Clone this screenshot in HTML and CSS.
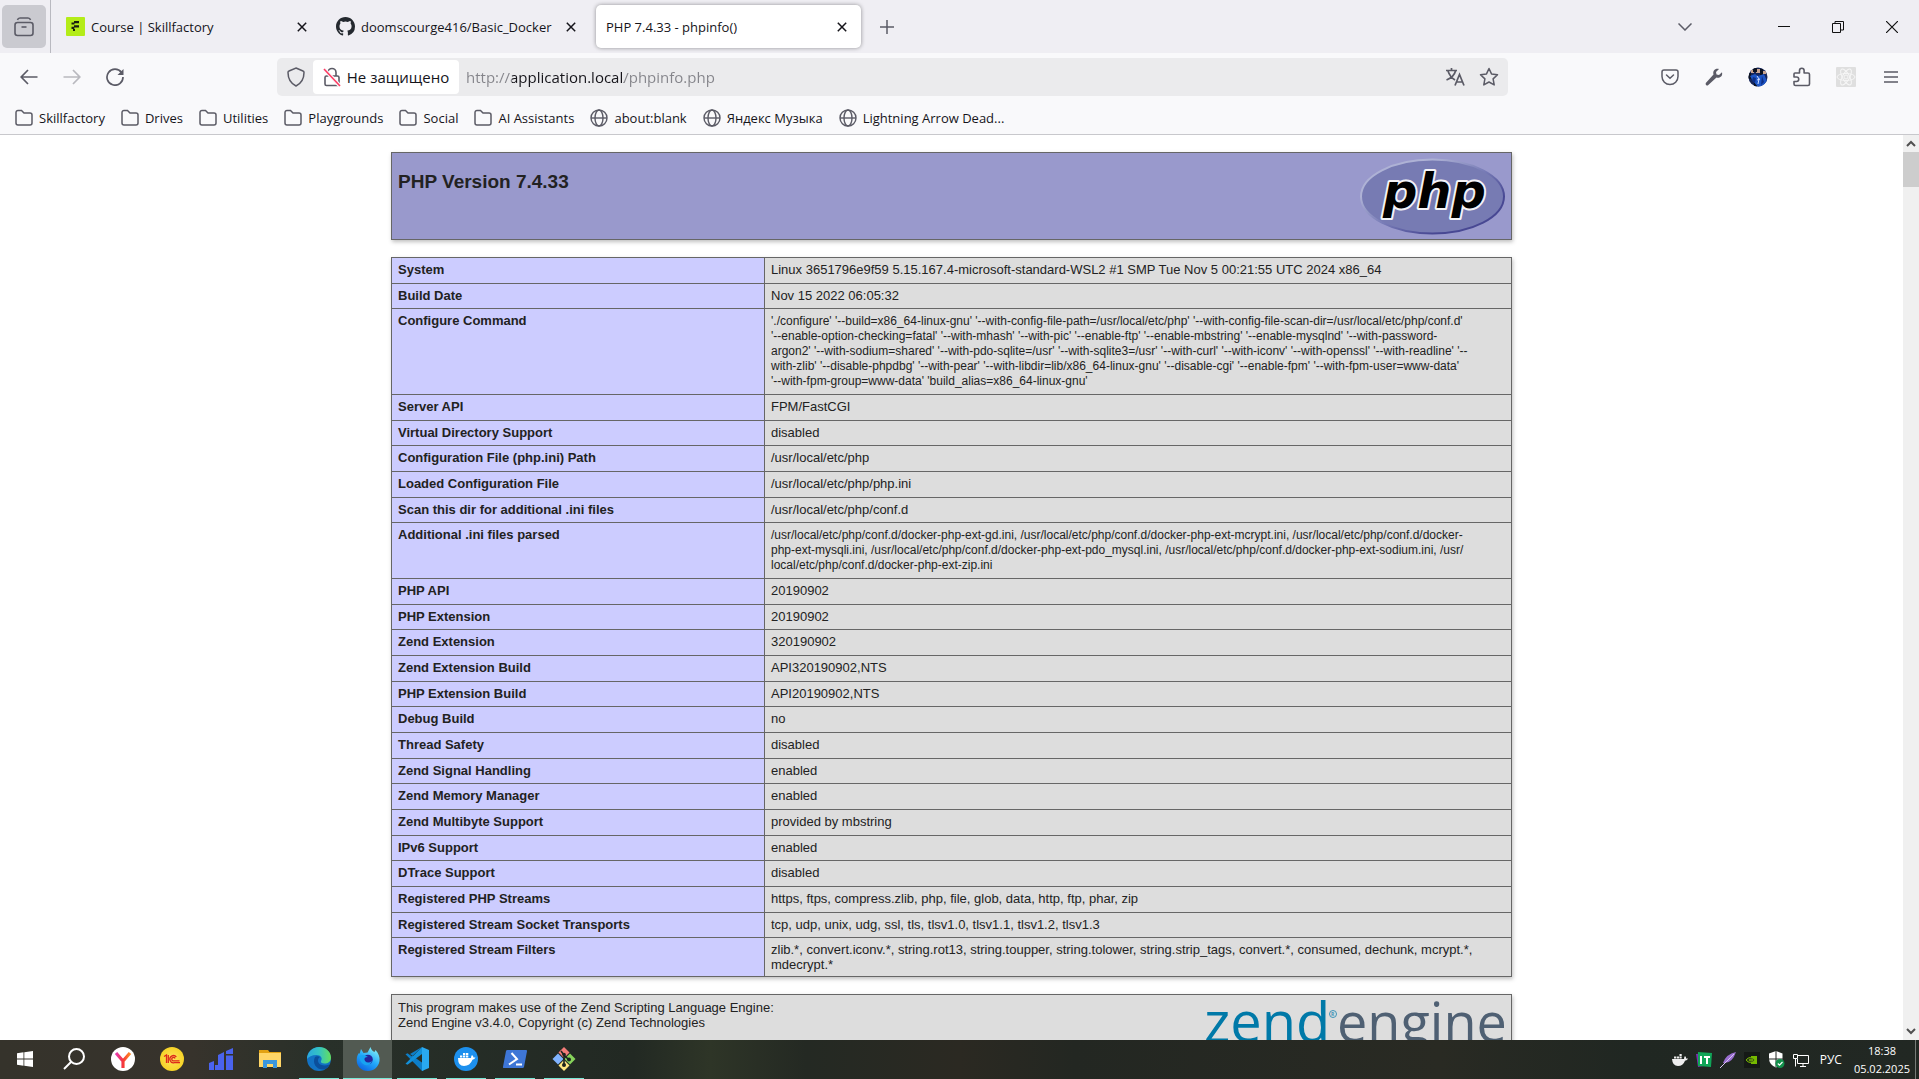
FILE: index.html
```html
<!DOCTYPE html>
<html lang="ru">
<head>
<meta charset="utf-8">
<title>PHP 7.4.33 - phpinfo()</title>
<link rel="stylesheet" href="styles.css">
</head>
<body>
<svg class="defs" aria-hidden="true">
  <symbol id="folder" viewBox="0 0 18 18"><path d="M1 14V3.500a2 2 0 0 1 2-2h3.500l2.500 2.500h6a2 2 0 0 1 2 2V14a2 2 0 0 1-2 2H3a2 2 0 0 1-2-2z" fill="none" stroke="currentColor" stroke-width="1.500"/></symbol>
  <symbol id="globe" viewBox="0 0 18 18"><g fill="none" stroke="currentColor" stroke-width="1.400"><circle cx="9" cy="9" r="8"/><ellipse cx="9" cy="9" rx="4" ry="8"/><path d="M1 9h16"/></g></symbol>
  <symbol id="cross" viewBox="0 0 10 10"><path d="M.8.8l8.400 8.400M9.200.8L.8 9.200" stroke="currentColor" stroke-width="1.500" fill="none"/></symbol>
</svg>

<header class="browser">
  <div class="tabs">
    <button class="view" aria-label="Firefox View"><svg width="20" height="20" viewBox="0 0 20 20" fill="none" stroke="currentColor" stroke-width="1.600"><path d="M3.500 3q.5-2 2.500-2h8q2 0 2.500 2"/><rect x="1" y="5.500" width="18" height="13" rx="2.500"/><path d="M7.500 10h5"/></svg></button>
    <div class="tab tab-wide">
      <svg width="19" height="19" viewBox="0 0 19 19"><rect width="19" height="19" rx="1" fill="#b4ec18"/><path d="M8 4h5v2.200H8zM5.500 5.500h3v2h-3zM8 8.300h5v2.200H8zM5.500 9.800h2.800v2.200H5.500zM7 12h2v2H7z" fill="#1a1f10"/></svg>
      <span class="tab-title">Course | Skillfactory</span>
      <button class="close" aria-label="Close tab"><svg width="10" height="10"><use href="#cross"/></svg></button>
    </div>
    <div class="tab">
      <svg width="19" height="19" viewBox="0 0 16 16"><path fill="#24292f" d="M8 0C3.580 0 0 3.580 0 8c0 3.540 2.290 6.530 5.470 7.590.4.070.55-.17.55-.38 0-.19-.01-.82-.01-1.490-2.010.37-2.530-.49-2.690-.94-.09-.23-.48-.94-.82-1.130-.28-.15-.68-.52-.01-.53.63-.01 1.080.58 1.230.82.72 1.210 1.870.87 2.330.66.070-.52.28-.87.51-1.070-1.780-.2-3.640-.89-3.640-3.950 0-.87.31-1.590.82-2.150-.08-.2-.36-1.020.08-2.120 0 0 .67-.21 2.200.82a7.600 7.600 0 0 1 4 0c1.530-1.040 2.200-.82 2.200-.82.44 1.100.16 1.920.08 2.120.51.56.82 1.270.82 2.150 0 3.070-1.870 3.750-3.650 3.950.29.25.54.73.54 1.480 0 1.070-.01 1.930-.01 2.200 0 .21.15.46.55.38A8 8 0 0 0 16 8c0-4.420-3.580-8-8-8z"/></svg>
      <span class="tab-title">doomscourge416/Basic_Docker</span>
      <button class="close" aria-label="Close tab"><svg width="10" height="10"><use href="#cross"/></svg></button>
    </div>
    <div class="tab tab-active">
      <span class="tab-title">PHP 7.4.33 - phpinfo()</span>
      <button class="close" aria-label="Close tab"><svg width="10" height="10"><use href="#cross"/></svg></button>
    </div>
    <button class="new-tab" aria-label="New tab"><svg width="14" height="14" viewBox="0 0 14 14" stroke="currentColor" stroke-width="1.500"><path d="M7 0v14M0 7h14"/></svg></button>
    <div class="window-controls">
      <button class="list-tabs" aria-label="List all tabs"><svg width="14" height="8" viewBox="0 0 14 8" fill="none" stroke="#5b5b66" stroke-width="1.500"><path d="M.5.5L7 7 13.500.5"/></svg></button>
      <button aria-label="Minimize"><svg width="12" height="12" viewBox="0 0 12 12" stroke="#111"><path d="M0 5.500h12"/></svg></button>
      <button aria-label="Restore"><svg width="12" height="12" viewBox="0 0 12 12" fill="none" stroke="#111"><path d="M.5 2.500h8v9h-8zM3 2.500v-2h8.500v8.500H9"/></svg></button>
      <button aria-label="Close window"><svg width="12" height="12" viewBox="0 0 12 12" stroke="#111" stroke-width="1.200"><path d="M0 0l12 12M12 0L0 12"/></svg></button>
    </div>
  </div>

  <div class="nav">
    <div class="nav-buttons">
      <button aria-label="Back"><svg width="18" height="16" viewBox="0 0 18 16" fill="none" stroke="currentColor" stroke-width="1.700"><path d="M17.500 8H1.500M8 1L1.200 8 8 15"/></svg></button>
      <button aria-label="Forward" disabled><svg width="18" height="16" viewBox="0 0 18 16" fill="none" stroke="currentColor" stroke-width="1.700"><path d="M.5 8h16M10 1l6.800 7-6.800 7"/></svg></button>
      <button aria-label="Reload"><svg width="18" height="18" viewBox="0 0 18 18" fill="none" stroke="currentColor" stroke-width="1.700"><path d="M15.500 4.500A8 8 0 1 0 17 9"/><path d="M17.500 1v6H11.500z" fill="currentColor" stroke="none"/></svg></button>
    </div>
    <div class="urlbar">
      <button class="shield" aria-label="Tracking protection"><svg width="18" height="20" viewBox="0 0 18 20" fill="none" stroke="currentColor" stroke-width="1.500"><path d="M9 1l7 3q1 .4 1 1.500C17 12 14 16.500 9 19 4 16.500 1 12 1 5.500 1 4.400 1 4.400 2 4z"/></svg></button>
      <button class="identity"><svg width="18" height="20" viewBox="0 0 18 20" fill="none" stroke="currentColor" stroke-width="1.600"><path d="M5 9V5.500a4 4 0 0 1 8 0V9"/><rect x="2" y="9" width="14" height="9.500" rx="1.500"/><path d="M1 2l16 17" stroke="#f9f9fb" stroke-width="4"/><path d="M1 2l16 17" stroke="#ff3b62"/></svg>Не защищено</button>
      <input class="address" type="text" aria-label="Address" value="http://application.local/phpinfo.php">
      <button aria-label="Translate"><svg width="20" height="20" viewBox="0 0 20 20" fill="none" stroke="currentColor" stroke-width="1.700"><path d="M1 3.500h11M6.500 1v2.500M3 4q2 6 7 9M10.500 4Q9 10 1.500 13M10 18.500l4.500-11 4.500 11M11.500 15h6"/></svg></button>
      <button aria-label="Bookmark this page"><svg width="20" height="20" viewBox="0 0 20 20" fill="none" stroke="currentColor" stroke-width="1.500" stroke-linejoin="round"><path d="M10 1.500l2.500 5.400 6 .8-4.400 4.200 1.100 6-5.200-2.900-5.200 2.900 1.100-6L1.500 7.700l6-.8z"/></svg></button>
    </div>
    <div class="extensions">
      <button aria-label="Save to Pocket"><svg width="18" height="18" viewBox="0 0 18 18" fill="none" stroke="currentColor" stroke-width="1.500" stroke-linecap="round"><path d="M3 2h12a2 2 0 0 1 2 2v4.500a8 8 0 0 1-16 0V4a2 2 0 0 1 2-2z"/><path d="M5.500 7L9 10.300 12.500 7"/></svg></button>
      <button aria-label="Developer tools"><svg width="18" height="18" viewBox="0 0 18 18"><path d="M17 4.200L14 7l-2.500-.5L11 4l3-3C10 0 7.500 3 8.500 6.500L.8 15q-.6 1.500.5 2.200t2-.2L11.500 9.500C15 10.500 18 8 17 4.200z" fill="currentColor"/></svg></button>
      <button aria-label="Account"><svg width="20" height="20" viewBox="0 0 20 20"><clipPath id="face"><circle cx="10" cy="10" r="9.500"/></clipPath><g clip-path="url(#face)"><path fill="#16265a" d="M0 0h20v20H0z"/><path fill="#c9a48f" d="M3 3h3v3H3zM8 2h4v4H8zM15 4h3v3h-3z"/><path fill="#0c1220" d="M5 1h4v4H5zM12 2h3v6h-3zM0 6h3v6H0zM6 16h3v4H6z"/><path fill="#1d55c5" d="M2 9l5-2 3 2 6-2 3 7-4 6h-5L5 14z"/><path fill="#0e2f86" d="M5 10l3 1-1 5-3-2zM14 9l2 6-3 3z"/><path d="M9 9l2 3-1 5M9 13l3-1" stroke="#cfdcff" fill="none"/></g></svg></button>
      <button aria-label="Extensions"><svg width="18" height="20" viewBox="0 0 18 20" fill="none" stroke="currentColor" stroke-width="1.600" stroke-linejoin="round"><path d="M2 6h4.500V3.500a2.300 2.300 0 0 1 4.600 0V6H15a1.500 1.500 0 0 1 1.500 1.500V17a1.500 1.500 0 0 1-1.500 1.500H2.500A1.500 1.500 0 0 1 1 17v-2.500h2.500a2.200 2.200 0 0 0 0-4.500H1V7a1 1 0 0 1 1-1z"/></svg></button>
      <button aria-label="React Developer Tools"><svg width="20" height="20" viewBox="0 0 20 20" fill="none" stroke="#f6f6f6"><rect width="20" height="20" rx="1" fill="#dfdfdf" stroke="none"/><circle cx="10" cy="10" r="2"/><ellipse cx="10" cy="10" rx="9" ry="3.500"/><ellipse cx="10" cy="10" rx="9" ry="3.500" transform="rotate(60 10 10)"/><ellipse cx="10" cy="10" rx="9" ry="3.500" transform="rotate(120 10 10)"/></svg></button>
      <button class="menu" aria-label="Menu"><svg width="14" height="12" viewBox="0 0 14 12" stroke="currentColor" stroke-width="1.500"><path d="M0 1h14M0 6h14M0 11h14"/></svg></button>
    </div>
  </div>

  <nav class="bookmarks">
    <a href="#"><svg width="18" height="18"><use href="#folder"/></svg>Skillfactory</a>
    <a href="#"><svg width="18" height="18"><use href="#folder"/></svg>Drives</a>
    <a href="#"><svg width="18" height="18"><use href="#folder"/></svg>Utilities</a>
    <a href="#"><svg width="18" height="18"><use href="#folder"/></svg>Playgrounds</a>
    <a href="#"><svg width="18" height="18"><use href="#folder"/></svg>Social</a>
    <a href="#"><svg width="18" height="18"><use href="#folder"/></svg>AI Assistants</a>
    <a href="#"><svg width="18" height="18"><use href="#globe"/></svg>about:blank</a>
    <a href="#"><svg width="18" height="18"><use href="#globe"/></svg>Яндекс Музыка</a>
    <a href="#"><svg width="18" height="18"><use href="#globe"/></svg>Lightning Arrow Dead...</a>
  </nav>
</header>

<div class="viewport">
  <main class="page" lang="en">
    <div class="box banner">
      <h1>PHP Version 7.4.33</h1>
      <svg class="php-logo" width="145" height="77" viewBox="0 0 145 77" role="img" aria-label="PHP logo">
        <defs>
          <linearGradient id="rim" x1="0" y1="0" x2="1" y2="1"><stop offset="0.250" stop-color="#aeb2d5"/><stop offset="0.500" stop-color="#7a7eb8"/><stop offset="0.750" stop-color="#484893"/></linearGradient>
        </defs>
        <ellipse cx="72.500" cy="38.500" rx="71.500" ry="37" fill="#777bb3" stroke="url(#rim)" stroke-width="2"/>
        <text x="23" y="50" class="php-word">php</text>
      </svg>
    </div>

    <table class="box info">
      <tr><th scope="row">System</th><td>Linux 3651796e9f59 5.15.167.4-microsoft-standard-WSL2 #1 SMP Tue Nov 5 00:21:55 UTC 2024 x86_64</td></tr>
      <tr><th scope="row">Build Date</th><td>Nov 15 2022 06:05:32</td></tr>
      <tr><th scope="row">Configure Command</th><td class="long">'./configure' '--build=x86_64-linux-gnu' '--with-config-file-path=/usr/local/etc/php' '--with-config-file-scan-dir=/usr/local/etc/php/conf.d'<br>'--enable-option-checking=fatal' '--with-mhash' '--with-pic' '--enable-ftp' '--enable-mbstring' '--enable-mysqlnd' '--with-password-<br>argon2' '--with-sodium=shared' '--with-pdo-sqlite=/usr' '--with-sqlite3=/usr' '--with-curl' '--with-iconv' '--with-openssl' '--with-readline' '--<br>with-zlib' '--disable-phpdbg' '--with-pear' '--with-libdir=lib/x86_64-linux-gnu' '--disable-cgi' '--enable-fpm' '--with-fpm-user=www-data'<br>'--with-fpm-group=www-data' 'build_alias=x86_64-linux-gnu'</td></tr>
      <tr><th scope="row">Server API</th><td>FPM/FastCGI</td></tr>
      <tr><th scope="row">Virtual Directory Support</th><td>disabled</td></tr>
      <tr><th scope="row">Configuration File (php.ini) Path</th><td>/usr/local/etc/php</td></tr>
      <tr><th scope="row">Loaded Configuration File</th><td>/usr/local/etc/php/php.ini</td></tr>
      <tr><th scope="row">Scan this dir for additional .ini files</th><td>/usr/local/etc/php/conf.d</td></tr>
      <tr><th scope="row">Additional .ini files parsed</th><td class="long">/usr/local/etc/php/conf.d/docker-php-ext-gd.ini, /usr/local/etc/php/conf.d/docker-php-ext-mcrypt.ini, /usr/local/etc/php/conf.d/docker-<br>php-ext-mysqli.ini, /usr/local/etc/php/conf.d/docker-php-ext-pdo_mysql.ini, /usr/local/etc/php/conf.d/docker-php-ext-sodium.ini, /usr/<br>local/etc/php/conf.d/docker-php-ext-zip.ini</td></tr>
      <tr><th scope="row">PHP API</th><td>20190902</td></tr>
      <tr><th scope="row">PHP Extension</th><td>20190902</td></tr>
      <tr><th scope="row">Zend Extension</th><td>320190902</td></tr>
      <tr><th scope="row">Zend Extension Build</th><td>API320190902,NTS</td></tr>
      <tr><th scope="row">PHP Extension Build</th><td>API20190902,NTS</td></tr>
      <tr><th scope="row">Debug Build</th><td>no</td></tr>
      <tr><th scope="row">Thread Safety</th><td>disabled</td></tr>
      <tr><th scope="row">Zend Signal Handling</th><td>enabled</td></tr>
      <tr><th scope="row">Zend Memory Manager</th><td>enabled</td></tr>
      <tr><th scope="row">Zend Multibyte Support</th><td>provided by mbstring</td></tr>
      <tr><th scope="row">IPv6 Support</th><td>enabled</td></tr>
      <tr><th scope="row">DTrace Support</th><td>disabled</td></tr>
      <tr><th scope="row">Registered PHP Streams</th><td>https, ftps, compress.zlib, php, file, glob, data, http, ftp, phar, zip</td></tr>
      <tr><th scope="row">Registered Stream Socket Transports</th><td>tcp, udp, unix, udg, ssl, tls, tlsv1.0, tlsv1.1, tlsv1.2, tlsv1.3</td></tr>
      <tr><th scope="row">Registered Stream Filters</th><td>zlib.*, convert.iconv.*, string.rot13, string.toupper, string.tolower, string.strip_tags, convert.*, consumed, dechunk, mcrypt.*,<br>mdecrypt.*</td></tr>
    </table>

    <div class="box engine">
      <p>This program makes use of the Zend Scripting Language Engine:<br>Zend Engine v3.4.0, Copyright (c) Zend Technologies</p>
      <svg class="zend-logo" width="302" height="64" viewBox="0 0 302 64" role="img" aria-label="Zend engine logo">
        <text x="0" y="42" class="zend-word">zend</text>
        <g fill="none" stroke="#3b93b8"><circle cx="129" cy="14" r="3.500"/></g>
        <text x="127" y="16" class="zend-reg">R</text>
        <text x="133" y="42" class="engine-word">engine</text>
      </svg>
    </div>
  </main>
  <div class="scrollbar" aria-hidden="true">
    <span class="arrow"><svg width="10" height="7" viewBox="0 0 10 7" fill="none" stroke="#505050" stroke-width="2"><path d="M1 6l4-4 4 4"/></svg></span>
    <span class="thumb"></span>
    <span class="arrow arrow-down"><svg width="10" height="7" viewBox="0 0 10 7" fill="none" stroke="#505050" stroke-width="2"><path d="M1 1l4 4 4-4"/></svg></span>
  </div>
</div>

<footer class="taskbar">
  <div class="apps">
    <button aria-label="Start"><svg width="16" height="16" viewBox="0 0 16 16" fill="#fff"><path d="M0 2.200L6.500 1.300V7.600H0zM7.300 1.200L16 0V7.600H7.300zM0 8.400h6.500v6.300L0 13.800zM7.300 8.400H16V16L7.300 14.800z"/></svg></button>
    <button aria-label="Search"><svg width="22" height="22" viewBox="0 0 22 22" fill="none" stroke="#fff" stroke-width="2"><circle cx="13.500" cy="8.500" r="7.500"/><path d="M8 14l-7 7"/></svg></button>
    <button aria-label="Yandex Browser"><svg width="24" height="24" viewBox="0 0 24 24"><defs><linearGradient id="ya" x1="0" x2="1"><stop offset="0" stop-color="#e53bb0"/><stop offset=".5" stop-color="#f5363a"/><stop offset="1" stop-color="#ff8a20"/></linearGradient></defs><circle cx="12" cy="12" r="12" fill="#fff"/><path d="M5 6l7 8 7-8M12 13v8" fill="none" stroke="url(#ya)" stroke-width="3.200"/></svg></button>
    <button aria-label="1C"><svg width="24" height="24" viewBox="0 0 24 24"><defs><radialGradient id="c1"><stop offset="0" stop-color="#ffe45c"/><stop offset="1" stop-color="#f6d327"/></radialGradient></defs><circle cx="12" cy="12" r="12" fill="url(#c1)"/><g fill="none" stroke="#dd2a1b" stroke-width="1.300"><path d="M4 9.500L6.500 8v8M8.300 8v8M16.300 10a3.600 3.600 0 1 0-2 5.700H20M15 11.500a1.700 1.700 0 1 0-1 2.300h5.500"/></g></svg></button>
    <button aria-label="Statistics"><svg width="24" height="22" viewBox="0 0 24 22" fill="#4a63ee"><path d="M0 15l5-2v9H0zM6 17h3v5H6zM9 7l6-3v18H9zM17 3l7-3v6h-7zM17 7.500h7V22h-7z"/></svg></button>
    <button aria-label="Explorer"><svg width="22" height="18" viewBox="0 0 22 18"><path fill="#e2a213" d="M0 0h9l1.500 2H22v3H0z"/><path fill="#ffd667" d="M0 3h22v14H0z"/><path fill="#3a96dd" d="M4 18v-8h14v8h-4v-4H8v4z"/></svg></button>
    <button class="running" aria-label="Edge"><svg width="24" height="24" viewBox="0 0 24 24"><defs><linearGradient id="edge-top" x1="0" x2="1"><stop offset="0" stop-color="#2aa7df"/><stop offset=".5" stop-color="#34c3c3"/><stop offset="1" stop-color="#64df5c"/></linearGradient></defs><circle cx="12" cy="12" r="12" fill="#1272c4"/><path fill="url(#edge-top)" d="M0 12C0 5 5.500 0 12 0c7 0 12 5 12 10.500 0 4-3 6-6.500 6-3 0-4-1.300-3.500-2.500 2-3-.5-6-4.500-6C5 8 1.500 10 0 12z"/><path fill="#0b4f9c" d="M8 10c-3 6 1 13 9 12.500 2.500-.5 5-3 5.500-5C15 20 11 17 11 13.500c0-2 1-3 2-3.500-1.500-1-4-1-5 0z"/></svg></button>
    <button class="running focused" aria-label="Firefox"><svg width="24" height="24" viewBox="0 0 24 24"><defs><linearGradient id="fx" x1=".8" y1="0" x2=".2" y2="1"><stop offset="0" stop-color="#8bf3f5"/><stop offset=".5" stop-color="#23a9fb"/><stop offset="1" stop-color="#0b61e0"/></linearGradient></defs><path fill="url(#fx)" d="M5 2l2.500 4 4-.5L14.500 0q1 4 4 5l1-2c3 3 4.500 7 4 11C22.500 20 18 24 12 24 5 24 .5 19 .7 13 .8 9 2 7 3 6l.5 1z"/><circle cx="12" cy="12.500" r="4.800" fill="#25259c"/><path d="M3 9q6-2 9 1-5 0-3 4 3 3 7 0-2 5-7 4-5-2-6-9z" fill="#17a3f2"/></svg></button>
    <button class="running" aria-label="Visual Studio Code"><svg width="24" height="24" viewBox="0 0 24 24"><path fill="#0d7ec8" d="M17 0L7 9.600 2.500 6.200.5 7.200 17 24l2-1V17L5 7z"/><path fill="#1290da" d="M17 0v7L2.500 17.800l-2-1z"/><path fill="#29a9f1" d="M17 0l7 3v18l-7 3z"/></svg></button>
    <button class="running" aria-label="Docker Desktop"><svg width="24" height="24" viewBox="0 0 24 24"><circle cx="12" cy="12" r="12" fill="#1d90ee"/><path fill="#fff" d="M4 11h13q0-2 1-3 1.500 1 1.500 2.500h2q-1 2-3 2.300Q16 19 10 19 4 19 4 11zM6 8.500h2.300v2H6zM9 8.500h2.300v2H9zM12 8.500h2.300v2H12zM12 6h2.300v2H12zM9 6h2.300v2H9z"/></svg></button>
    <button class="running" aria-label="PowerShell"><svg width="24" height="20" viewBox="0 0 24 20"><path fill="#3e76d6" d="M4.500 1H23a1 1 0 0 1 1 1.200L21 18a1.500 1.500 0 0 1-1.500 1H1a1 1 0 0 1-1-1.200L3 2a1.500 1.500 0 0 1 1.500-1z"/><path d="M8.500 4l5.500 6-8 5.500M13 15.500h6" fill="none" stroke="#fff" stroke-width="2"/></svg></button>
    <button class="running" aria-label="Git Bash"><svg width="24" height="24" viewBox="0 0 24 24"><path fill="#f37c78" d="M12 0l5.500 5.500L12 11 6.500 5.500z"/><path fill="#80b3ff" d="M6 6.500L11.500 12 6 17.500.5 12z"/><path fill="#87d35b" d="M18 6.500l5.500 5.500-5.500 5.500L12.500 12z"/><path fill="#ffe680" d="M12 13l5.500 5.500L12 24l-5.500-5.500z"/><path d="M9 4l3 4v10M12 8l5 5" stroke="#1c231f" stroke-width="1.600" fill="none"/><circle cx="12" cy="7.500" r="1.800" fill="#1c231f"/><circle cx="12" cy="18" r="2" fill="#1c231f"/><circle cx="17" cy="12.500" r="2" fill="#1c231f"/></svg></button>
  </div>
  <div class="tray">
    <svg width="16" height="14" viewBox="0 0 16 14" fill="#eee"><path d="M0 6h12q0-2 1-3 1.500 1 1 2.500h2q-.5 2-3 2.200Q11 13 6 13 .5 13 0 6zM2 3.500h2.200v2H2zM4.800 3.500H7v2H4.800zM7.500 3.500h2.200v2H7.500zM7.500 1h2.200v2H7.500z"/></svg>
    <svg width="16" height="16" viewBox="0 0 16 16"><path fill="#7d2fb0" d="M0 2l12-1 1 12-11 2z"/><path fill="#10a558" d="M2 0l14 1-1 14-13-1z"/><path d="M5 4v8M8 5h6M11 5v7" stroke="#fff" stroke-width="2"/></svg>
    <svg width="16" height="16" viewBox="0 0 16 16"><path fill="#9a6fd0" d="M16 0Q6 2 3 11q9 1 13-11z"/><path d="M0 16L14 2" stroke="#d9c4f3"/></svg>
    <svg width="16" height="16" viewBox="0 0 16 16"><path fill="#151916" d="M0 0h16v16H0z"/><path fill="#76b900" d="M7 4h6v8H7z"/><path d="M2 8q4-5 9 0-5 5-9 0zM5 8q2-2 4 0-2 2-4 0z" fill="#263018" stroke="#76b900"/></svg>
    <svg width="17" height="18" viewBox="0 0 17 18"><path fill="#fff" d="M8 0l6.500 2.500V8Q14 14 8 16.500 1.500 14 1 8V2.500z"/><path d="M8 0v16M1 8h14" stroke="#222824"/><circle cx="12" cy="12.500" r="4.500" fill="#12904b"/><path d="M9.800 12.500l1.700 1.700 3-3.200" fill="none" stroke="#fff" stroke-width="1.200"/></svg>
    <svg width="16" height="16" viewBox="0 0 16 16" fill="none" stroke="#fff"><path d="M5 3.500h10.500v8H4.500V7M.5 2.500h4v4h-4zM2.500 6.500v8M7 14.500h6M10 11.500v3"/></svg>
    <button class="language">РУС</button>
    <div class="clock"><time>18:38</time><span>05.02.2025</span></div>
  </div>
</footer>
</body>
</html>
```
FILE: styles.css
```css
* { box-sizing: border-box; }

body {
  margin: 0;
  height: 100vh;
  display: flex;
  flex-direction: column;
  overflow: hidden;
  background: #fff;
  color: #15141a;
  font: 13px/18px "Open Sans", "Noto Sans", sans-serif;
}

button {
  display: flex;
  align-items: center;
  justify-content: center;
  border: 0;
  padding: 0;
  background: none;
  color: inherit;
  font: inherit;
}

svg { flex: none; }

.defs { position: absolute; width: 0; height: 0; }

/* Browser chrome */
.browser {
  flex: none;
  background: #f9f9fb;
  border-bottom: 1px solid #c8c8cc;
}

.tabs {
  display: flex;
  height: 53px;
  background: #efeef3;
}

.view {
  width: 44px;
  margin: 5px 4px 5px 2px;
  border-radius: 5px;
  background: #cacad0;
  color: #5b5b66;
}

.tab {
  display: flex;
  align-items: center;
  gap: 6px;
  width: 260px;
  padding: 0 10px;
}

.tab-wide {
  width: 276px;
  padding-left: 15px;
  padding-right: 19px;
  border-left: 1px solid #b9b9c0;
}

.tab-title { flex: 1; white-space: nowrap; overflow: hidden; }

.tab-active {
  width: 265px;
  margin: 5px 0 5px 10px;
  padding-right: 14px;
  border-radius: 5px;
  background: #fff;
  box-shadow: 0 0 4px rgba(0, 0, 0, 0.4);
}

.close { width: 10px; height: 20px; }

.new-tab { width: 52px; color: #5b5b66; }

.window-controls { display: flex; margin-left: auto; }

.window-controls button { width: 54px; }

.window-controls .list-tabs { width: 44px; margin-right: 50px; }

.nav {
  display: flex;
  align-items: center;
  height: 48px;
  color: #5b5b66;
}

.nav-buttons { display: flex; width: 277px; padding-left: 7px; }

.nav-buttons button { width: 43px; height: 38px; }

.nav-buttons button:disabled { color: #b9b9bf; }

.urlbar {
  flex: 1;
  display: flex;
  align-items: center;
  height: 38px;
  padding-right: 2px;
  border-radius: 5px;
  background: #ebebed;
}

.urlbar button { width: 34px; height: 34px; }

.urlbar .shield { width: 36px; padding-left: 2px; }

.urlbar .identity {
  gap: 6px;
  width: 146px;
  border-radius: 4px;
  background: #fff;
  color: #15141a;
  font-size: 15px;
}

.urlbar .identity svg { color: #5b5b66; }

.address {
  flex: 1;
  min-width: 0;
  border: 0;
  padding: 0 0 0 7px;
  font: 15px/20px "Open Sans", "Noto Sans", sans-serif;
  /* host name stands out from the rest of the address */
  background: linear-gradient(90deg, #84848a 53px, #15141a 53px 165px, #84848a 165px);
  background-clip: text;
  -webkit-background-clip: text;
  -webkit-text-fill-color: transparent;
}

.extensions { display: flex; width: 411px; padding: 0 6px 0 140px; }

.extensions button { width: 44px; height: 38px; }

.extensions .menu { margin-left: auto; }

.bookmarks {
  display: flex;
  gap: 16px;
  height: 33px;
  padding: 0 15px;
}

.bookmarks a {
  display: flex;
  align-items: center;
  gap: 6px;
  white-space: nowrap;
  color: #15141a;
  text-decoration: none;
}

.bookmarks svg { color: #5b5b66; }

/* Page area */
.viewport { flex: 1; display: flex; min-height: 0; }

.page {
  flex: 1;
  overflow: hidden;
  padding-top: 17px;
  color: #222;
  font: 13px/15px "Liberation Sans", Arial, sans-serif;
}

.box {
  width: 1121px;
  max-width: 100%;
  margin: 0 auto 17px;
  border: 1px solid #666;
  box-shadow: 1px 2px 4px rgba(0, 0, 0, 0.25);
}

.banner {
  display: flex;
  justify-content: space-between;
  height: 88px;
  padding: 5px 6px;
  background: #99c;
}

.banner h1 { margin: 13px 0 0; font-size: 19px; line-height: 22px; }

.php-word {
  font: italic bold 48px "DejaVu Sans", sans-serif;
  fill: #000;
  stroke: #f4f4f8;
  stroke-width: 4px;
  stroke-linejoin: round;
  paint-order: stroke;
}

.info { border-collapse: collapse; table-layout: fixed; }

.info th,
.info td {
  border: 1px solid #666;
  padding: 4px 6px 6px;
  text-align: left;
  vertical-align: top;
}

.info tr:nth-child(3n + 2) > * { padding-bottom: 5px; }

.info tr:last-child > * { padding-bottom: 4px; }

.info th { width: 373px; background: #ccf; }

.info td { background: #ddd; white-space: nowrap; }

.info .long { padding-top: 5px; padding-bottom: 5px; font-size: 12px; }

.engine {
  display: flex;
  justify-content: space-between;
  padding: 5px 5px 5px 6px;
  background: #ddd;
}

.engine p { margin: 0; }

.zend-word { font: 56px "Open Sans", sans-serif; fill: #0079a8; }

.zend-reg { font: bold 5px "Open Sans", sans-serif; fill: #3b93b8; }

.engine-word { font: 54px "Open Sans", sans-serif; fill: #4f6073; }

.scrollbar {
  display: flex;
  flex-direction: column;
  width: 16px;
  background: #f0f0f0;
}

.arrow { display: flex; align-items: center; justify-content: center; height: 17px; }

.arrow-down { margin-top: auto; }

.thumb { height: 35px; background: #cdcdcd; }

/* Taskbar */
.taskbar {
  flex: none;
  display: flex;
  justify-content: space-between;
  height: 39px;
  background: linear-gradient(90deg, #35332b 0, #37332c 10%, #283029 17%, #222923 33%, #2e3527 37%, #242923 42%, #2b2922 50%, #232722 56%, #292a23 75%, #202722 85%, #222823 100%);
  color: #fff;
}

.apps { display: flex; }

.apps button { width: 49px; border-bottom: 1px solid transparent; }

.apps .running {
  background: linear-gradient(#76e8d5, #76e8d5) center 38px / 40px 1px no-repeat border-box;
}

.apps .focused { background-color: #525a52; background-size: 49px 1px; }

.tray {
  display: flex;
  align-items: center;
  gap: 8px;
  margin-right: 3px;
  padding-right: 5px;
  border-right: 1px solid #777b77;
  font-size: 12px;
}

.language { margin: 0 4px 0 3px; }

.clock {
  display: flex;
  flex-direction: column;
  align-items: center;
  font-size: 11px;
}
```
